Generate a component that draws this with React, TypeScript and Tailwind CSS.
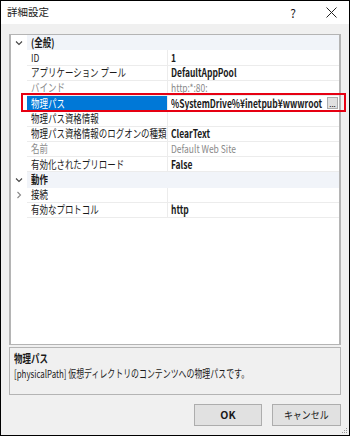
import React from 'react';

type Row = {
  kind: 'cat' | 'prop';
  label: string;
  value?: string;
  expander?: 'open' | 'closed';
  dim?: boolean;
  bold?: boolean;
  selected?: boolean;
};

const rows: Row[] = [
  { kind: 'cat', label: '(全般)', expander: 'open' },
  { kind: 'prop', label: 'ID', value: '1', bold: true },
  { kind: 'prop', label: 'アプリケーション プール', value: 'DefaultAppPool', bold: true },
  { kind: 'prop', label: 'バインド', value: 'http:*:80:', dim: true },
  { kind: 'prop', label: '物理パス', value: '%SystemDrive%¥inetpub¥wwwroot', bold: true, selected: true },
  { kind: 'prop', label: '物理パス資格情報', value: '' },
  { kind: 'prop', label: '物理パス資格情報のログオンの種類', value: 'ClearText', bold: true },
  { kind: 'prop', label: '名前', value: 'Default Web Site', dim: true },
  { kind: 'prop', label: '有効化されたプリロード', value: 'False', bold: true },
  { kind: 'cat', label: '動作', expander: 'open' },
  { kind: 'prop', label: '接続', value: '', expander: 'closed' },
  { kind: 'prop', label: '有効なプロトコル', value: 'http', bold: true },
];

// narrow text, the dialog font is a condensed UI face
const T = ({ children, className = '' }: { children: React.ReactNode; className?: string }) => (
  <span className={`inline-block origin-left scale-x-[0.77] whitespace-nowrap ${className}`}>{children}</span>
);

const Chevron = ({ open }: { open: boolean }) => (
  <svg width="8" height="8" viewBox="0 0 8 8">
    {open ? (
      <path d="M1 2.5 L4 5.5 L7 2.5" fill="none" stroke="#444" strokeWidth="1.1" />
    ) : (
      <path d="M2.5 1 L5.5 4 L2.5 7" fill="none" stroke="#888" strokeWidth="1.1" />
    )}
  </svg>
);

const PropertyRow = ({ row }: { row: Row }) => {
  if (row.kind === 'cat') {
    return (
      <div className="flex h-[15.25px]">
        <div className="w-[16px] flex items-center justify-center bg-white">
          <Chevron open />
        </div>
        <div className="flex-1 bg-[#f1f4f9] flex items-center pl-[4px] font-bold text-[#1a1a1a]">
          <T>{row.label}</T>
        </div>
      </div>
    );
  }
  return (
    <div className="flex h-[15.25px]">
      <div className="w-[16px] flex items-center justify-center bg-white">
        {row.expander && <Chevron open={row.expander === 'open'} />}
      </div>
      <div
        className={`w-[140px] flex items-center pl-[4px] border-b ${
          row.selected
            ? 'bg-[#0078d7] text-white border-[#0078d7]'
            : row.dim
            ? 'text-[#8a8a8a] border-[#ececec]'
            : 'text-[#1a1a1a] border-[#ececec]'
        }`}
      >
        <div className="w-0">
          <T>{row.label}</T>
        </div>
      </div>
      <div className="w-px bg-[#ececec]" />
      <div className="flex-1 flex items-center pl-[3px] border-b border-[#ececec]">
        <div className="flex-1">
          <div className="w-0">
            <T className={`${row.bold ? 'font-bold text-[#1a1a1a]' : ''} ${row.dim ? 'text-[#8a8a8a]' : ''}`}>
              {row.value}
            </T>
          </div>
        </div>
        {row.selected && (
          <div className="w-[11px] h-[12px] mr-[1px] bg-[#e1e1e1] border border-[#adadad] flex items-end justify-center text-[8px] leading-[8px] text-black">
            ...
          </div>
        )}
      </div>
    </div>
  );
};

export default function App() {
  return (
    <div
      className="relative w-[350px] h-[436px] border border-black bg-[#f0f0f0] flex flex-col text-[11px] leading-none text-[#1a1a1a]"
      style={{ fontFamily: '"Noto Sans CJK JP", "Noto Sans", sans-serif' }}
    >
      {/* Title bar */}
      <div className="h-[23px] bg-white flex items-center pl-[6px] shrink-0">
        <span className="flex-1 text-[10.5px]">詳細設定</span>
        <span className="w-[12px] text-center text-[12px] mr-[27px]">?</span>
        <svg width="11" height="11" viewBox="0 0 11 11" className="mr-[12px]">
          <path d="M0.5 0.5 L10.5 10.5 M10.5 0.5 L0.5 10.5" stroke="#222" strokeWidth="1" />
        </svg>
      </div>

      <div className="flex-1 flex flex-col px-[8px] pt-[10px]">
        {/* Property grid */}
        <div className="h-[311px] bg-white border-y border-x-2 border-[#b4b4b4] flex flex-col">
          {rows.map((row, i) => (
            <PropertyRow key={i} row={row} />
          ))}
        </div>

        {/* Description */}
        <div className="mt-[2px] h-[48px] border border-[#b4b4b4] px-[4px] pt-[5px]">
          <div className="font-bold">
            <T>物理パス</T>
          </div>
          <div className="mt-[4px]">
            <span className="inline-block origin-left scale-x-[0.72] whitespace-nowrap">
              [physicalPath] 仮想ディレクトリのコンテンツへの物理パスです。
            </span>
          </div>
        </div>

        {/* Buttons */}
        <div className="mt-[9px] flex justify-end gap-[10px]">
          <button className="w-[68px] h-[22px] bg-[#e1e1e1] border border-[#adadad] text-[10.5px] font-bold">OK</button>
          <button className="w-[69px] h-[22px] bg-[#e1e1e1] border border-[#adadad] text-[10.5px]">
            <span className="inline-block scale-x-[0.85]">キャンセル</span>
          </button>
        </div>
      </div>

      {/* Resize grip */}
      <svg width="6" height="6" viewBox="0 0 6 6" className="absolute right-[1px] bottom-[1px]">
        <rect x="4" y="0" width="1" height="1" fill="#999" />
        <rect x="2" y="2" width="1" height="1" fill="#999" />
        <rect x="4" y="2" width="1" height="1" fill="#999" />
        <rect x="0" y="4" width="1" height="1" fill="#999" />
        <rect x="2" y="4" width="1" height="1" fill="#999" />
        <rect x="4" y="4" width="1" height="1" fill="#999" />
      </svg>

      {/* Red highlight box */}
      <div className="absolute left-[20px] top-[92px] w-[325px] h-[19px] border-2 border-[#e60012] pointer-events-none" />
    </div>
  );
}
